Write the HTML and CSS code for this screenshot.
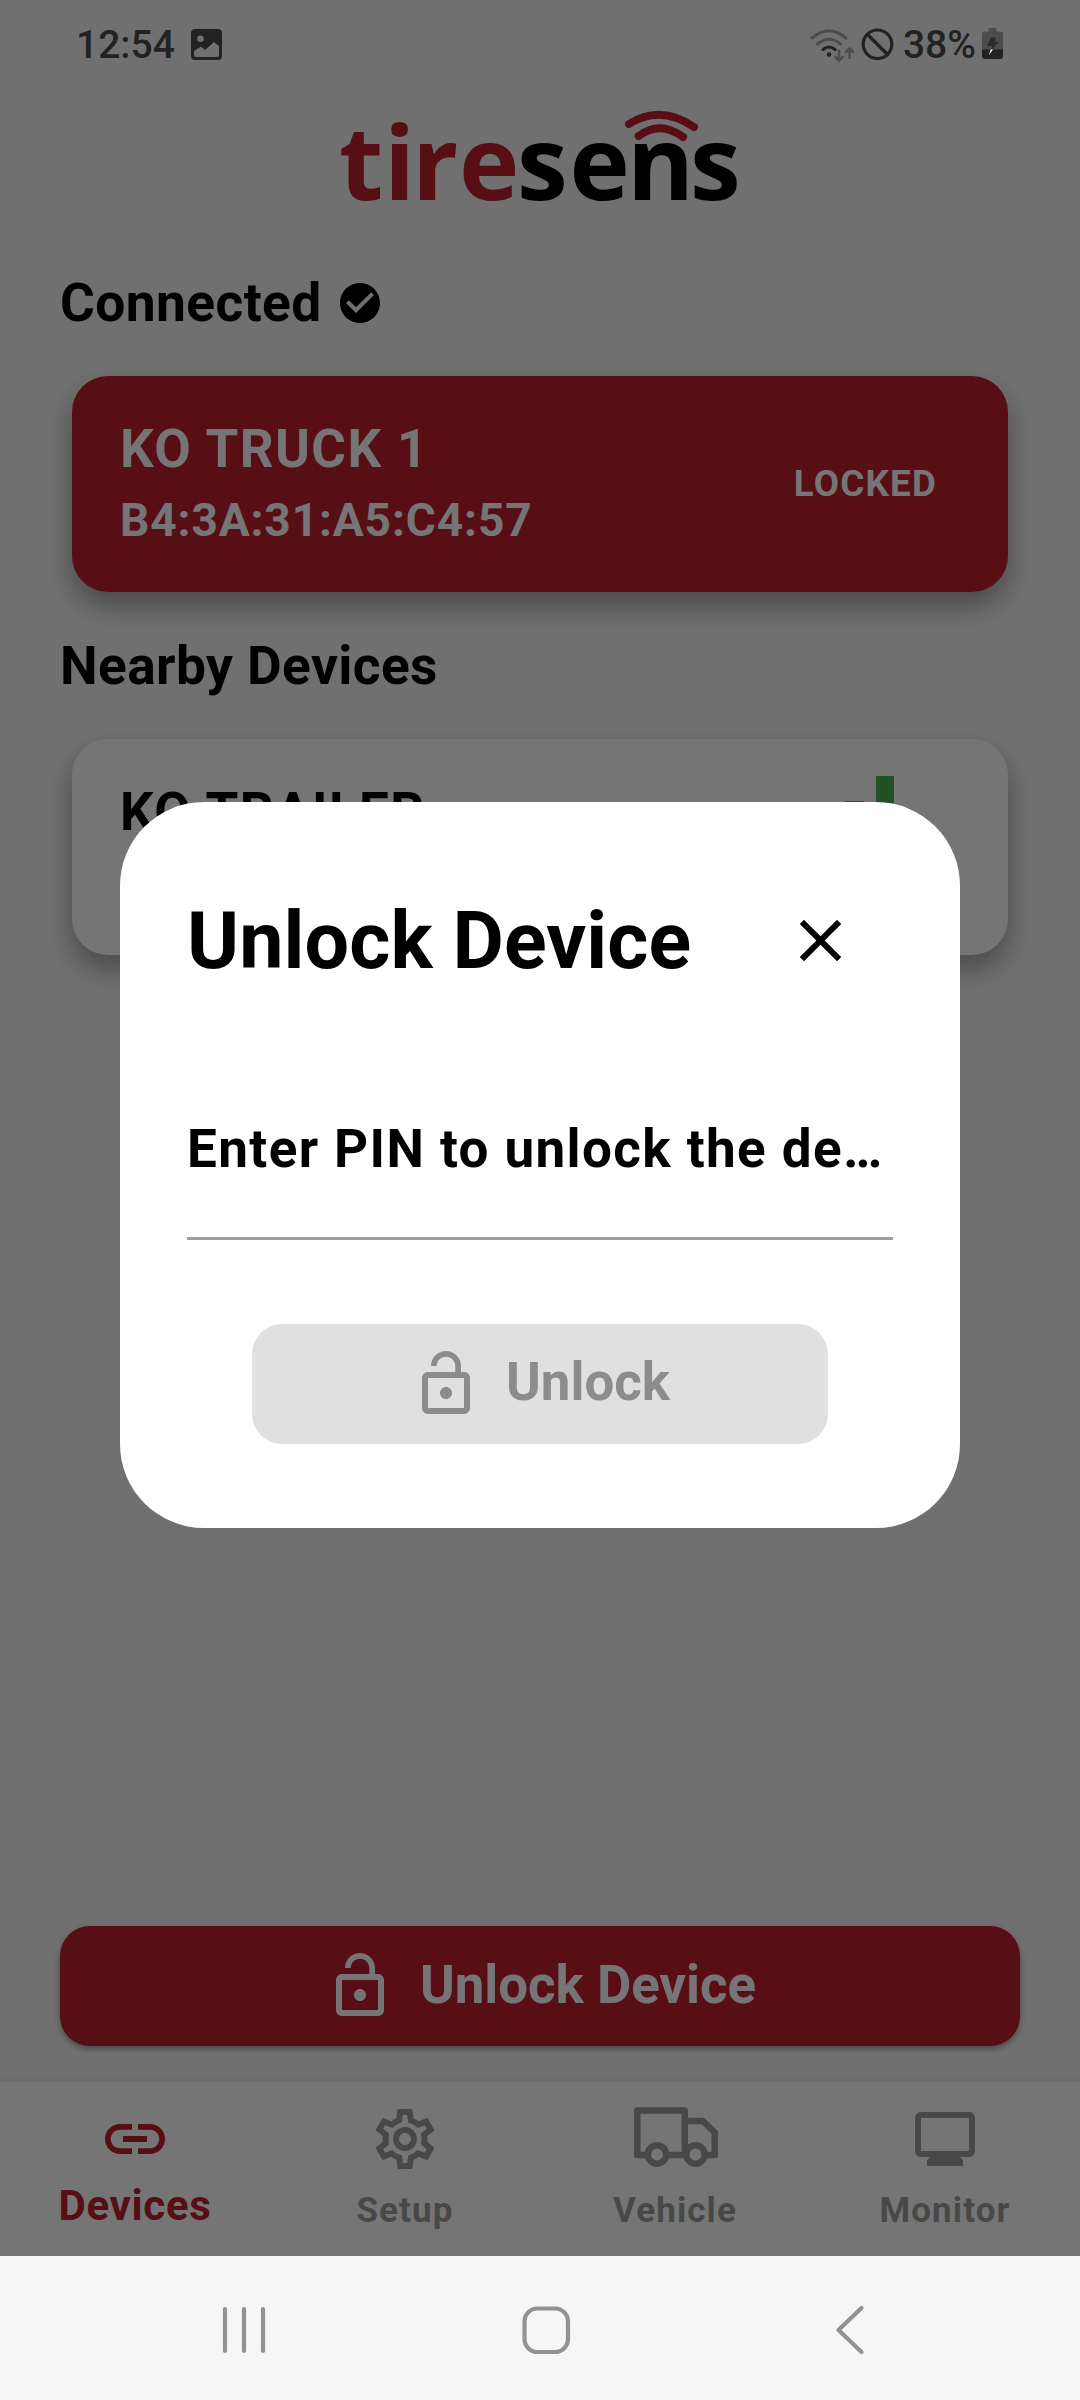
FILE: index.html
```html
<!DOCTYPE html>
<html lang="en">
<head>
<meta charset="utf-8">
<title>Tiresens</title>
<link rel="stylesheet" href="styles.css">
</head>
<body>
<div class="phone">
  <div class="app">
    <header class="brand">
      <svg width="450" height="200" viewBox="315 50 450 200" role="img" aria-label="tiresens">
        <text class="logo-text logo-red" y="200" x="339 384 412 459">tire</text>
        <text class="logo-text" y="200" x="517 569.500 627 690">sens</text>
        <g class="logo-waves">
          <path d="M629 124Q660 104 694 127"/>
          <path d="M638.600 136Q660 120 683 137"/>
        </g>
      </svg>
    </header>

    <main class="content">
      <h2 class="section-title">
        <span>Connected</span>
        <svg class="check" viewBox="0 0 24 24"><path d="M12 2C6.480 2 2 6.480 2 12s4.480 10 10 10 10-4.480 10-10S17.520 2 12 2zm-2 15l-5-5 1.410-1.410L10 14.170l7.590-7.590L19 8l-9 9z"/></svg>
      </h2>
      <article class="card card-connected">
        <div class="card-info">
          <div class="card-name">KO TRUCK 1</div>
          <div class="card-mac">B4:3A:31:A5:C4:57</div>
        </div>
        <div class="card-state">LOCKED</div>
      </article>

      <h2 class="section-title nearby">Nearby Devices</h2>
      <article class="card">
        <div class="card-info">
          <div class="card-name">KO TRAILER</div>
          <div class="card-mac">&nbsp;</div>
        </div>
        <div class="signal"><i class="bar b1"></i><i class="bar b2"></i><i class="bar b3"></i><i class="bar b4"></i></div>
      </article>
    </main>

    <button class="btn btn-main">
      <svg class="icon" viewBox="0 0 24 24"><path d="M12 17c1.100 0 2-.9 2-2s-.9-2-2-2-2 .9-2 2 .9 2 2 2zm6-9h-1V6c0-2.760-2.240-5-5-5S7 3.240 7 6h1.900c0-1.710 1.390-3.100 3.100-3.100 1.710 0 3.100 1.390 3.100 3.100v2H6c-1.100 0-2 .9-2 2v10c0 1.100.9 2 2 2h12c1.100 0 2-.9 2-2V10c0-1.100-.9-2-2-2zm0 12H6V10h12v10z"/></svg>
      <span>Unlock Device</span>
    </button>

    <nav class="tabs">
      <a class="tab active">
        <svg class="icon" viewBox="0 0 24 24"><path d="M3.900 12c0-1.710 1.390-3.100 3.100-3.100h4V7H7c-2.760 0-5 2.240-5 5s2.240 5 5 5h4v-1.900H7c-1.710 0-3.100-1.390-3.100-3.100zM8 13h8v-2H8v2zm9-6h-4v1.900h4c1.710 0 3.100 1.390 3.100 3.100s-1.390 3.100-3.100 3.100h-4V17h4c2.760 0 5-2.240 5-5s-2.240-5-5-5z"/></svg>
        <span>Devices</span>
      </a>
      <a class="tab">
        <svg class="icon" viewBox="0 0 24 24"><path d="M19.430 12.980c.04-.32.07-.64.07-.98 0-.34-.03-.66-.07-.98l2.110-1.650c.19-.15.24-.42.12-.64l-2-3.460c-.09-.16-.26-.25-.44-.25-.06 0-.12.010-.17.030l-2.490 1c-.52-.4-1.080-.73-1.690-.98l-.38-2.650C14.460 2.180 14.250 2 14 2h-4c-.25 0-.46.180-.49.420l-.38 2.650c-.61.250-1.170.590-1.690.980l-2.490-1c-.06-.02-.12-.03-.18-.03-.17 0-.34.090-.43.250l-2 3.460c-.13.220-.07.490.12.640l2.110 1.650c-.04.320-.07.650-.07.980 0 .33.030.66.070.98l-2.110 1.650c-.19.150-.24.420-.12.640l2 3.460c.09.160.26.250.44.250.06 0 .12-.01.170-.03l2.490-1c.52.400 1.080.730 1.690.980l.38 2.650c.03.240.24.420.49.420h4c.25 0 .46-.18.490-.42l.38-2.650c.61-.25 1.170-.59 1.690-.98l2.490 1c.06.020.12.030.18.030.17 0 .34-.09.430-.25l2-3.460c.12-.22.070-.49-.12-.64l-2.110-1.650zm-1.980-1.710c.04.310.05.520.05.730 0 .21-.02.430-.05.730l-.14 1.130.89.700 1.080.840-.7 1.210-1.270-.51-1.040-.42-.9.680c-.43.320-.84.560-1.250.730l-1.060.430-.16 1.130-.2 1.350h-1.400l-.19-1.350-.16-1.130-1.060-.43c-.43-.18-.83-.41-1.230-.71l-.91-.7-1.060.430-1.270.510-.7-1.210 1.080-.84.890-.7-.14-1.130c-.03-.31-.05-.54-.05-.74s.02-.43.050-.73l.14-1.130-.89-.7-1.080-.84.700-1.210 1.270.510 1.040.420.900-.68c.43-.32.840-.56 1.250-.73l1.060-.43.160-1.130.2-1.350h1.390l.19 1.350.16 1.130 1.060.430c.43.180.83.410 1.230.710l.91.700 1.060-.43 1.270-.51.700 1.210-1.070.850-.89.700.14 1.130zM12 8c-2.210 0-4 1.790-4 4s1.790 4 4 4 4-1.790 4-4-1.790-4-4-4zm0 6c-1.100 0-2-.9-2-2s.9-2 2-2 2 .9 2 2-.9 2-2 2z"/></svg>
        <span>Setup</span>
      </a>
      <a class="tab">
        <svg class="icon truck" viewBox="0 0 90 72"><g fill="none" stroke="currentColor" stroke-width="6.500" stroke-linejoin="round">
          <path d="M17 52H7.250V7.500H54.750V52H37"/><path d="M55 18H73L84.750 29.500V52H76"/>
          <circle cx="27" cy="51.500" r="9.200"/><circle cx="65.500" cy="51.500" r="9.200"/></g></svg>
        <span>Vehicle</span>
      </a>
      <a class="tab">
        <svg class="icon" viewBox="0 0 24 24"><path d="M20 3H4c-1.100 0-2 .9-2 2v11c0 1.100.9 2 2 2h3l-1 1v2h12v-2l-1-1h3c1.100 0 2-.9 2-2V5c0-1.100-.9-2-2-2zm0 13H4V5h16v11z"/></svg>
        <span>Monitor</span>
      </a>
    </nav>
  </div>

  <div class="overlay">
    <div class="status">
      <span class="clock">12:54</span>
      <svg class="photo" width="32" height="32" viewBox="0 0 32 32"><path fill="#222" fill-rule="evenodd" d="M5 0H27Q31 0 31 4V27Q31 31 27 31H4Q0 31 0 27V4Q0 0 5 0ZM3 22V26Q3 28 5 28H26Q28 28 28 26V17L23 13L14 21L10 17.500ZM9.500 6.500A3.300 3.300 0 1 0 9.500 13.100A3.300 3.300 0 1 0 9.500 6.500Z"/></svg>
      <span class="spacer"></span>
      <svg class="sysicons" width="90" height="36" viewBox="808 25 90 36" fill="none" stroke-linecap="round">
        <g stroke="#4c4c4c" stroke-width="3"><path d="M811 36Q828 21.500 845 36"/><path d="M816.500 42Q828 32.500 839.500 42"/></g>
        <path stroke="#222" stroke-width="3" d="M822 47.500Q828 42.500 834 47.500"/><circle cx="828" cy="52.500" r="2.200" fill="#222"/>
        <g stroke="#4c4c4c" stroke-width="2.500"><path d="M838 49V58M834.500 55L838 58.500L841.500 55M848.500 56V46.500M845 50L848.500 46.500L852 50"/></g>
        <g stroke="#222" stroke-width="3.200"><circle cx="876.500" cy="42.300" r="14.300"/><path d="M866.500 32.500L886.500 52.500"/></g>
      </svg>
      <span class="percent">38%</span>
      <svg class="battery" width="22" height="32" viewBox="0 0 22 32"><path fill="#4c4c4c" d="M6.500 0H14.500V3.500H18Q21 3.500 21 6.500V22H0V6.500Q0 3.500 3 3.500H6.500Z"/><path fill="#222" d="M0 21.500H21V28Q21 31 18 31H3Q0 31 0 28Z"/><path fill="#2a2a2a" d="M9 9.500H14L12.500 14H17L10 21.500H9.500L10 18H5Z"/><path fill="#fff" d="M8.500 21.500H11L7 27Z"/></svg>
    </div>

    <section class="dialog">
      <div class="dialog-head">
        <h1>Unlock Device</h1>
        <svg class="close" viewBox="0 0 24 24"><path d="M19 6.410L17.590 5 12 10.590 6.410 5 5 6.410 10.590 12 5 17.590 6.410 19 12 13.410 17.590 19 19 17.590 13.410 12z"/></svg>
      </div>
      <div class="pin">Enter PIN to unlock the de…</div>
      <button class="btn btn-dialog" disabled>
        <svg class="icon" viewBox="0 0 24 24"><path d="M12 17c1.100 0 2-.9 2-2s-.9-2-2-2-2 .9-2 2 .9 2 2 2zm6-9h-1V6c0-2.760-2.240-5-5-5S7 3.240 7 6h1.900c0-1.710 1.390-3.100 3.100-3.100 1.710 0 3.100 1.390 3.100 3.100v2H6c-1.100 0-2 .9-2 2v10c0 1.100.9 2 2 2h12c1.100 0 2-.9 2-2V10c0-1.100-.9-2-2-2zm0 12H6V10h12v10z"/></svg>
        <span>Unlock</span>
      </button>
    </section>
  </div>

  <div class="sysnav">
    <svg width="60" height="60" viewBox="0 0 60 60"><path d="M11 9V51M30 9V51M49 9V51"/></svg>
    <svg width="60" height="60" viewBox="0 0 60 60"><rect x="8.500" y="8.500" width="43.500" height="43.500" rx="13"/></svg>
    <svg width="60" height="60" viewBox="0 0 60 60"><path d="M43.500 8L20.500 30L43.500 52"/></svg>
  </div>
</div>
</body>
</html>
```
FILE: styles.css
```css
* { box-sizing: border-box; }
body { margin: 0; font-family: Roboto, "Liberation Sans", sans-serif; font-weight: 700; color: #000; }
h1, h2 { margin: 0; font-weight: 700; }
.phone { position: relative; width: 1080px; height: 2400px; display: flex; flex-direction: column; overflow: hidden; }
.app { height: 2256px; background: #f4f4f4; display: flex; flex-direction: column; }
.brand { padding: 50px 0 0 315px; height: 242px; }
.brand svg { display: block; }
.logo-text { font: 700 102px "Open Sans", sans-serif; fill: #000; }
.logo-red { fill: #bd202e; }
.logo-waves { fill: none; stroke: #bd202e; stroke-width: 8; stroke-linecap: round; }

.content { flex: 1; }
.section-title { display: flex; align-items: center; height: 122px; padding-left: 60px; font-size: 53.300px; letter-spacing: .4px; }
.check { width: 48px; height: 48px; margin-left: 14px; }
.card { display: flex; align-items: center; justify-content: space-between; width: 936px; height: 216px; margin: 12px 72px 0; padding: 0 71px 0 48px; border-radius: 36px; background: #fff; box-shadow: 0 14px 28px rgba(0, 0, 0, .34); }
.card-connected { background: #bd202e; color: #fff; }
.card-name { font-size: 53px; line-height: 72px; letter-spacing: 1.400px; }
.card-mac { font-size: 46px; line-height: 70px; letter-spacing: .9px; }
.card-state { padding-bottom: 2px; font-size: 36.750px; letter-spacing: 1.200px; }
.nearby { height: 123px; margin-top: 12px; }
.signal { display: flex; align-items: flex-end; gap: 12px; height: 142px; margin-right: 43px; }
.bar { width: 18.500px; background: #4caf50; }
.b1 { height: 40px; } .b2 { height: 72px; } .b3 { height: 117px; } .b4 { height: 142px; }

.btn { display: flex; align-items: center; justify-content: center; gap: 24px; height: 120px; padding: 0; border: 0; border-radius: 30px; font: 700 52.800px Roboto, "Liberation Sans", sans-serif; }
.btn span { padding-bottom: 3px; }
.icon { display: block; width: 72px; height: 72px; fill: currentColor; }
.btn-main { width: 960px; margin: 0 60px 36px; background: #bd202e; color: #fff; box-shadow: 0 3px 6px rgba(0, 0, 0, .35); }

.tabs { display: flex; height: 174px; background: #fff; box-shadow: 0 -5px 0 rgba(0, 0, 0, .025); }
.tab { flex: 1; display: flex; flex-direction: column; align-items: center; padding-top: 21px; color: #9e9e9e; font-size: 35px; letter-spacing: 1.100px; }
.tab span { line-height: 41px; margin-top: 15px; }
.active { color: #bd202e; font-size: 42px; letter-spacing: .7px; }
.active span { line-height: 49px; margin-top: 6px; }
.truck { width: 90px; }

/* modal barrier with the status bar and the dialog above it */
.overlay { position: absolute; top: 0; left: 0; width: 1080px; height: 2256px; background: rgba(0, 0, 0, .54); }
.status { display: flex; align-items: center; height: 90px; padding: 0 76px; color: #222; font-size: 39px; font-weight: 500; }
.photo { margin-left: 16px; }
.spacer { flex: 1; }
.percent { margin-left: 4px; margin-right: 6px; }
.battery { margin-bottom: 2px; }
.dialog { width: 840px; height: 726px; margin: 711.500px 120px 0; padding: 0 67px; border-radius: 84px; background: #fff; }
.dialog-head { display: flex; align-items: center; justify-content: space-between; height: 278px; padding-right: 37px; }
h1 { font-size: 79px; letter-spacing: .1px; }
.close { width: 71px; height: 71px; }
.pin { height: 160px; border-bottom: 3px solid #9e9e9e; font-size: 53px; line-height: 139px; letter-spacing: 1.400px; white-space: nowrap; }
.btn-dialog { width: 576px; margin: 84px auto 0; background: #e0e0e0; color: #8c8c8c; }

.sysnav { display: flex; height: 144px; padding: 44px 0 0 214px; gap: 242px; background: #f6f6f6; }
.sysnav svg { fill: none; stroke: #929292; stroke-width: 4.200; stroke-linecap: round; stroke-linejoin: round; }
```
